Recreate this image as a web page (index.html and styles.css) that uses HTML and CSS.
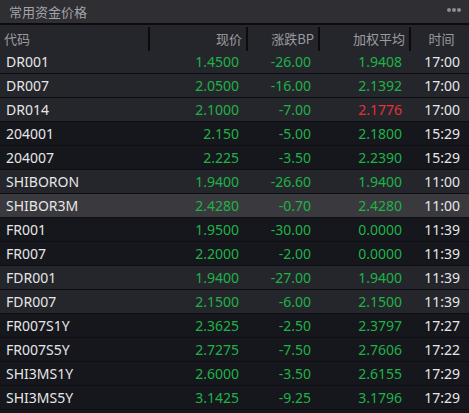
FILE: index.html
```html
<!DOCTYPE html>
<html lang="zh">
<head>
<meta charset="utf-8">
<link rel="stylesheet" href="styles.css">
</head>
<body>
<div class="panel">
  <div class="titlebar">
    <span class="title">常用资金价格</span>
    <span class="dots"><i></i><i></i><i></i></span>
  </div>
  <div class="row head">
    <div class="c code">代码</div>
    <div class="c num">现价</div>
    <div class="c num">涨跌BP</div>
    <div class="c num">加权平均</div>
    <div class="c time">时间</div>
  </div>
  <div class="row light"><div class="c code">DR001</div><div class="c num g">1.4500</div><div class="c num g">-26.00</div><div class="c num g">1.9408</div><div class="c time">17:00</div></div>
  <div class="row light"><div class="c code">DR007</div><div class="c num g">2.0500</div><div class="c num g">-16.00</div><div class="c num g">2.1392</div><div class="c time">17:00</div></div>
  <div class="row light"><div class="c code">DR014</div><div class="c num g">2.1000</div><div class="c num g">-7.00</div><div class="c num r">2.1776</div><div class="c time">17:00</div></div>
  <div class="row dark"><div class="c code">204001</div><div class="c num g">2.150</div><div class="c num g">-5.00</div><div class="c num g">2.1800</div><div class="c time">15:29</div></div>
  <div class="row dark"><div class="c code">204007</div><div class="c num g">2.225</div><div class="c num g">-3.50</div><div class="c num g">2.2390</div><div class="c time">15:29</div></div>
  <div class="row light"><div class="c code">SHIBORON</div><div class="c num g">1.9400</div><div class="c num g">-26.60</div><div class="c num g">1.9400</div><div class="c time">11:00</div></div>
  <div class="row sel"><div class="c code">SHIBOR3M</div><div class="c num g">2.4280</div><div class="c num g">-0.70</div><div class="c num g">2.4280</div><div class="c time">11:00</div></div>
  <div class="row dark"><div class="c code">FR001</div><div class="c num g">1.9500</div><div class="c num g">-30.00</div><div class="c num g">0.0000</div><div class="c time">11:39</div></div>
  <div class="row dark"><div class="c code">FR007</div><div class="c num g">2.2000</div><div class="c num g">-2.00</div><div class="c num g">0.0000</div><div class="c time">11:39</div></div>
  <div class="row light"><div class="c code">FDR001</div><div class="c num g">1.9400</div><div class="c num g">-27.00</div><div class="c num g">1.9400</div><div class="c time">11:39</div></div>
  <div class="row light"><div class="c code">FDR007</div><div class="c num g">2.1500</div><div class="c num g">-6.00</div><div class="c num g">2.1500</div><div class="c time">11:39</div></div>
  <div class="row dark"><div class="c code">FR007S1Y</div><div class="c num g">2.3625</div><div class="c num g">-2.50</div><div class="c num g">2.3797</div><div class="c time">17:27</div></div>
  <div class="row dark"><div class="c code">FR007S5Y</div><div class="c num g">2.7275</div><div class="c num g">-7.50</div><div class="c num g">2.7606</div><div class="c time">17:22</div></div>
  <div class="row dark"><div class="c code">SHI3MS1Y</div><div class="c num g">2.6000</div><div class="c num g">-3.50</div><div class="c num g">2.6155</div><div class="c time">17:29</div></div>
  <div class="row dark"><div class="c code">SHI3MS5Y</div><div class="c num g">3.1425</div><div class="c num g">-9.25</div><div class="c num g">3.1796</div><div class="c time">17:29</div></div>
</div>
</body>
</html>
```
FILE: styles.css
```css
* { box-sizing: border-box; }
html, body { margin: 0; padding: 0; background: #16171b; }
body { font-family: "Noto Sans", "Noto Sans CJK SC", sans-serif; }
.panel { width: 469px; height: 413px; overflow: hidden; background: #16171b; }
.titlebar {
  height: 25px;
  background: #2e2e33;
  border-bottom: 2px solid #0c0c0e;
  display: flex;
  align-items: center;
  justify-content: space-between;
  padding: 0 8px 1px 9px;
}
.title { color: #a3a3a8; font-size: 13px; font-family: "Noto Sans CJK SC", sans-serif; }
.dots { display: flex; gap: 1px; align-self: flex-start; margin-top: 8px; }
.dots i { width: 4px; height: 4px; border-radius: 50%; background: #8c8c92; display: block; }
.row {
  display: grid;
  grid-template-columns: 150px 98px 72px 91px 58px;
  height: 24px;
  border-bottom: 1px solid #0e0f12;
  align-items: center;
  font-size: 14px;
  color: #e6e6e8;
}
.row .c { white-space: nowrap; line-height: 23px; }
.row.head {
  height: 25px;
  background: #25262b;
  border-bottom: none;
  font-size: 13px;
  color: #9b9ba1;
  font-family: "Noto Sans CJK SC", sans-serif;
  align-items: stretch;
}
.row.head .c { border-right: 2px solid #0c0c0e; line-height: 24px; margin: 2px 0 0; }
.row.head .c:last-child { border-right: none; }
.row.head .code { padding-left: 4px; }
.row.head .num { padding-right: 4px; }
.row.head .c.time { text-align: center; padding: 0 0 0 3px; }
.code { padding-left: 6px; }
.num { text-align: right; padding-right: 9px; }
.time { text-align: right; padding-right: 9px; }
.light { background: #25262b; }
.dark { background: #16171c; }
.sel { background: #3a3a3e; }
.g { color: #1db347; }
.r { color: #e8303a; }
```
